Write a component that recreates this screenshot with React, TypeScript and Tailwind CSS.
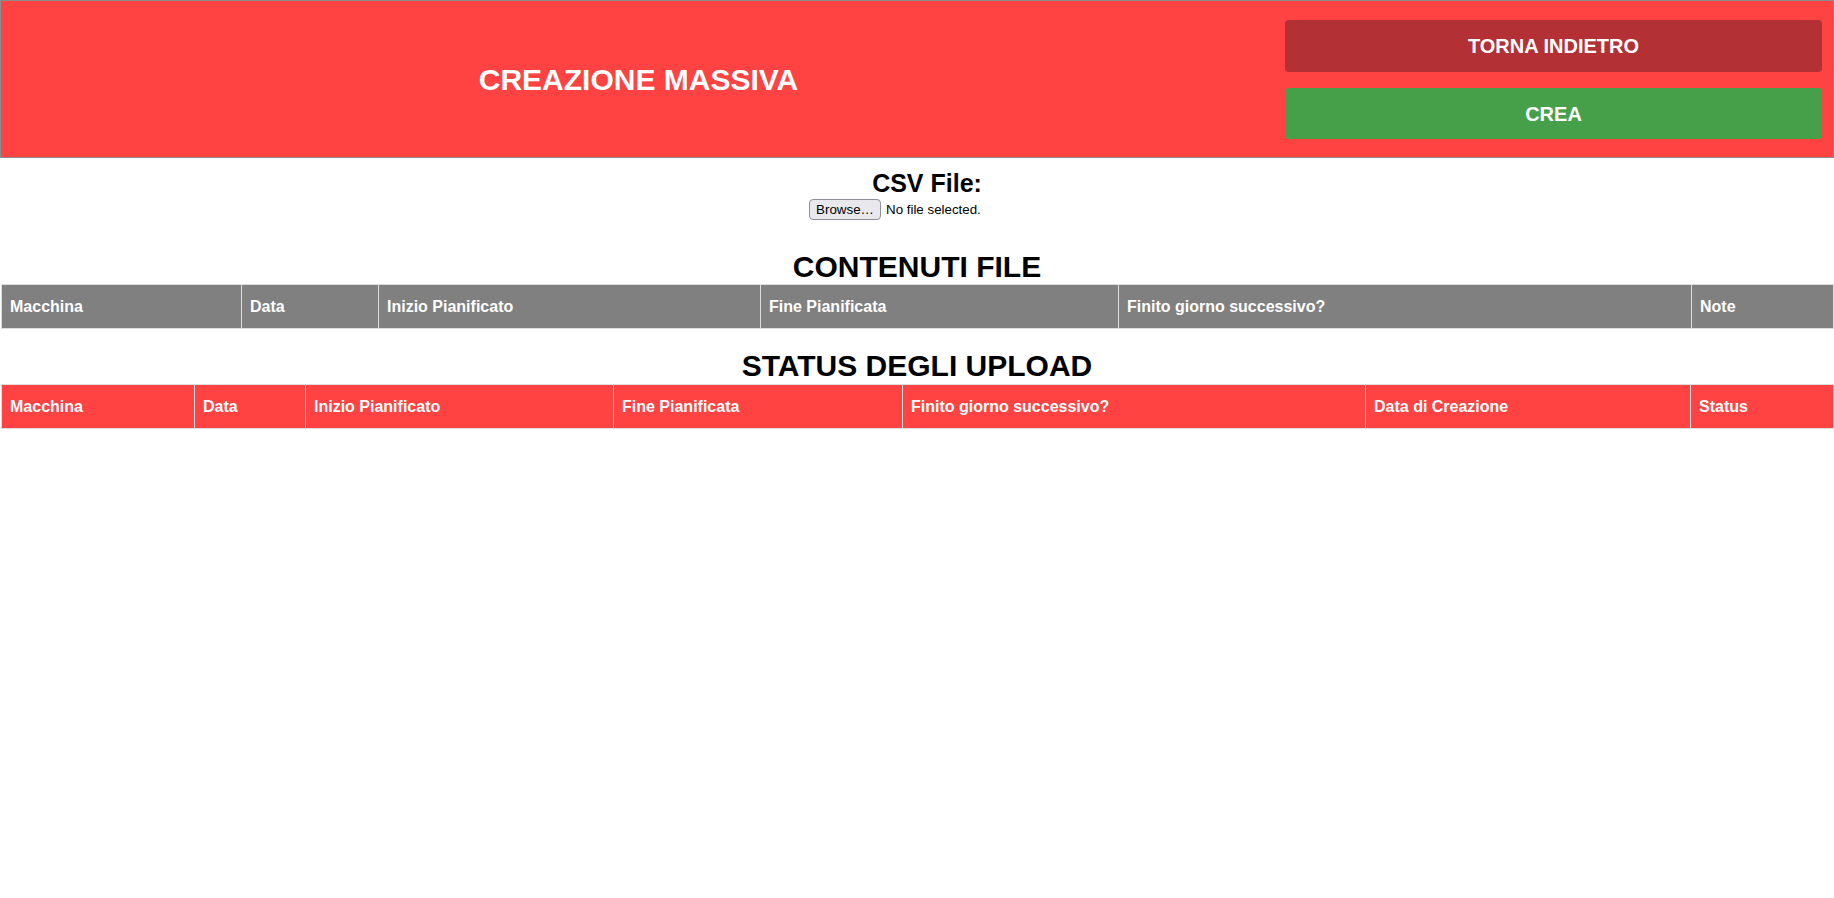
import React from "react";

const cols1: [string, number][] = [
  ["Macchina", 240],
  ["Data", 137],
  ["Inizio Pianificato", 382],
  ["Fine Pianificata", 358],
  ["Finito giorno successivo?", 573],
  ["Note", 142],
];

const cols2: [string, number][] = [
  ["Macchina", 193],
  ["Data", 111],
  ["Inizio Pianificato", 308],
  ["Fine Pianificata", 289],
  ["Finito giorno successivo?", 463],
  ["Data di Creazione", 325],
  ["Status", 143],
];

function HeaderTable({ cols, bg }: { cols: [string, number][]; bg: string }) {
  return (
    <table className="ml-[1px] w-[1832px] table-fixed border-collapse">
      <colgroup>
        {cols.map(([n, w]) => (
          <col key={n} style={{ width: w }} />
        ))}
      </colgroup>
      <thead>
        <tr className={bg}>
          {cols.map(([n]) => (
            <th
              key={n}
              className="border border-[#dddddd] px-[8px] pb-[12px] pt-[12px] text-left text-[16px] font-bold leading-[19px] text-white"
            >
              {n}
            </th>
          ))}
        </tr>
      </thead>
    </table>
  );
}

export default function App() {
  return (
    <div className="min-h-[898px] w-[1834px] bg-white font-['Liberation_Sans',Arial,sans-serif] text-black">
      <header className="flex h-[158px] border border-[#8c8c8c] bg-[#ff4242] pb-[18px] pr-[11px] pt-[19px]">
        <div className="flex flex-1 items-center justify-center pr-[9px]">
          <h1 className="text-[30px] font-bold leading-[30px] text-white">CREAZIONE MASSIVA</h1>
        </div>
        <div className="flex w-[537px] flex-col gap-[16px]">
          <button className="h-[52px] rounded-[4px] bg-[#b33034] text-[20px] font-bold text-white">
            TORNA INDIETRO
          </button>
          <button className="h-[51px] rounded-[4px] bg-[#46a049] text-[20px] font-bold text-white">
            CREA
          </button>
        </div>
      </header>

      <div className="flex flex-col items-center pt-[13px]">
        <h2 className="pl-[20px] text-[25px] font-bold leading-[25px]">CSV File:</h2>
        <div className="mt-[3px] flex w-[216px] items-center gap-[5px]">
          <span className="flex h-[21px] w-[72px] items-center justify-center rounded-[4px] border border-[#8f8f9d] bg-[#e9e9ed] text-[13.33px] text-black">
            Browse…
          </span>
          <span className="text-[13.33px] text-black">No file selected.</span>
        </div>
      </div>

      <h2 className="mt-[32px] h-[30px] text-center text-[30px] font-bold leading-[30px]">CONTENUTI FILE</h2>
      <div className="mt-[2px]">
        <HeaderTable cols={cols1} bg="bg-[#808080]" />
      </div>

      <h2 className="mt-[22px] h-[30px] text-center text-[30px] font-bold leading-[30px]">STATUS DEGLI UPLOAD</h2>
      <div className="mt-[3px]">
        <HeaderTable cols={cols2} bg="bg-[#ff4242]" />
      </div>
    </div>
  );
}
